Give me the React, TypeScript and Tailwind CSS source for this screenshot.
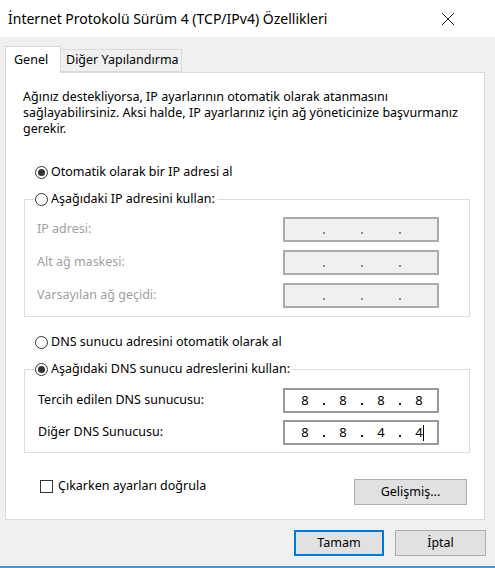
import React from "react";

const font = { fontFamily: '"Noto Sans", "Liberation Sans", sans-serif' };

function Radio({ checked }: { checked?: boolean }) {
  return (
    <span className="w-[13px] h-[13px] rounded-full border border-[#333333] bg-white flex items-center justify-center shrink-0">
      {checked && <span className="w-[7px] h-[7px] rounded-full bg-[#333333]" />}
    </span>
  );
}

function IpBox({ values, disabled, caret }: { values: string[]; disabled?: boolean; caret?: boolean }) {
  return (
    <div
      className={
        "w-[156px] h-[25px] border-2 flex items-center pl-[5px] " +
        (disabled ? "bg-[#f0f0f0] border-[#ababab]" : "bg-white border-[#999999]")
      }
    >
      {values.map((v, i) => (
        <React.Fragment key={i}>
          <span className="w-[30px] h-full flex items-center justify-center text-[13px] text-black relative">
            {v}
            {caret && i === 3 && <span className="absolute left-[19px] top-[3px] w-px h-[16px] bg-black" />}
          </span>
          {i < 3 && (
            <span className="w-[8px] h-full flex items-end justify-center pb-[6px]">
              <span className={"w-[2px] h-[2px] " + (disabled ? "bg-[#8a8a8a]" : "bg-[#222222]")} />
            </span>
          )}
        </React.Fragment>
      ))}
    </div>
  );
}

function Row({ label, disabled, children }: { label: string; disabled?: boolean; children: React.ReactNode }) {
  return (
    <div className="flex items-center justify-between h-[25px] pr-[30px]">
      <span className={disabled ? "text-[#a0a0a0]" : "text-black"}>{label}</span>
      {children}
    </div>
  );
}

export default function App() {
  return (
    <div className="w-[495px] h-[568px] bg-[#f0f0f0] flex flex-col text-[12.5px] text-black overflow-hidden" style={font}>
      {/* Title bar */}
      <div className="h-[37px] bg-white flex items-center justify-between pl-[8px] pr-[40px] shrink-0">
        <span className="text-[14px] text-black">İnternet Protokolü Sürüm 4 (TCP/IPv4) Özellikleri</span>
        <svg width="14" height="14" viewBox="0 0 14 14" className="mt-px">
          <path d="M1 1 L13 13 M13 1 L1 13" stroke="#222" strokeWidth="1" fill="none" />
        </svg>
      </div>

      {/* Tabs */}
      <div className="flex items-end pl-[5px] pt-[9px] h-[36px] shrink-0 relative z-10">
        <div className="w-[56px] h-[27px] bg-white border border-[#d9d9d9] border-b-0 flex items-center pl-[8px]">
          Genel
        </div>
        <div className="w-[121px] h-[23px] bg-[#f0f0f0] border border-[#d9d9d9] border-l-0 flex items-center pl-[5px] mb-px">
          Diğer Yapılandırma
        </div>
      </div>

      {/* Panel */}
      <div className="ml-[5px] w-[480px] h-[448px] bg-white border border-[#d9d9d9] -mt-px pl-[17px] pt-[16px] shrink-0">
        <p className="leading-[16px] w-[450px]">
          Ağınız destekliyorsa, IP ayarlarının otomatik olarak atanmasını sağlayabilirsiniz. Aksi halde, IP ayarlarınız için ağ yöneticinize başvurmanız gerekir.
        </p>

        <div className="flex items-center gap-[3px] h-[20px] mt-[25px] ml-[12px]">
          <Radio checked />
          <span>Otomatik olarak bir IP adresi al</span>
        </div>

        <fieldset className="mt-[7px] ml-[1px] w-[446px] border border-[#dcdcdc] pl-[12px] pb-[8px]">
          <legend className="flex items-center gap-[3px] h-[20px] -ml-[2px]">
            <Radio />
            <span className="pr-[2px]">Aşağıdaki IP adresini kullan:</span>
          </legend>
          <div className="flex flex-col gap-[8px] mt-[8px]">
            <Row label="IP adresi:" disabled>
              <IpBox values={["", "", "", ""]} disabled />
            </Row>
            <Row label="Alt ağ maskesi:" disabled>
              <IpBox values={["", "", "", ""]} disabled />
            </Row>
            <Row label="Varsayılan ağ geçidi:" disabled>
              <IpBox values={["", "", "", ""]} disabled />
            </Row>
          </div>
        </fieldset>

        <div className="flex items-center gap-[3px] h-[20px] mt-[15px] ml-[12px]">
          <Radio />
          <span>DNS sunucu adresini otomatik olarak al</span>
        </div>

        <fieldset className="mt-[7px] ml-[1px] w-[446px] border border-[#dcdcdc] pl-[13px] pb-[7px]">
          <legend className="flex items-center gap-[3px] h-[20px] -ml-[3px]">
            <Radio checked />
            <span className="pr-[2px]">Aşağıdaki DNS sunucu adreslerini kullan:</span>
          </legend>
          <div className="flex flex-col gap-[7px] mt-[9px]">
            <Row label="Tercih edilen DNS sunucusu:">
              <IpBox values={["8", "8", "8", "8"]} />
            </Row>
            <Row label="Diğer DNS Sunucusu:">
              <IpBox values={["8", "8", "4", "4"]} caret />
            </Row>
          </div>
        </fieldset>

        <div className="flex items-start justify-between mt-[26px] w-[444px]">
          <div className="flex items-center gap-[5px] h-[14px] ml-[17px]">
            <span className="w-[13px] h-[13px] border border-[#333333] bg-white shrink-0" />
            <span>Çıkarken ayarları doğrula</span>
          </div>
          <button className="w-[113px] h-[26px] bg-[#e1e1e1] border border-[#adadad] text-black">
            Gelişmiş...
          </button>
        </div>
      </div>

      {/* Bottom buttons */}
      <div className="flex justify-end gap-[11px] pr-[9px] mt-[10px] shrink-0">
        <button className="w-[90px] h-[26px] bg-[#e1e1e1] border-2 border-[#0078d7] text-black">Tamam</button>
        <button className="w-[91px] h-[26px] bg-[#e1e1e1] border border-[#adadad] text-black">İptal</button>
      </div>

      <div className="mt-auto h-[2px] bg-[#4a97d4] shrink-0" />
    </div>
  );
}
